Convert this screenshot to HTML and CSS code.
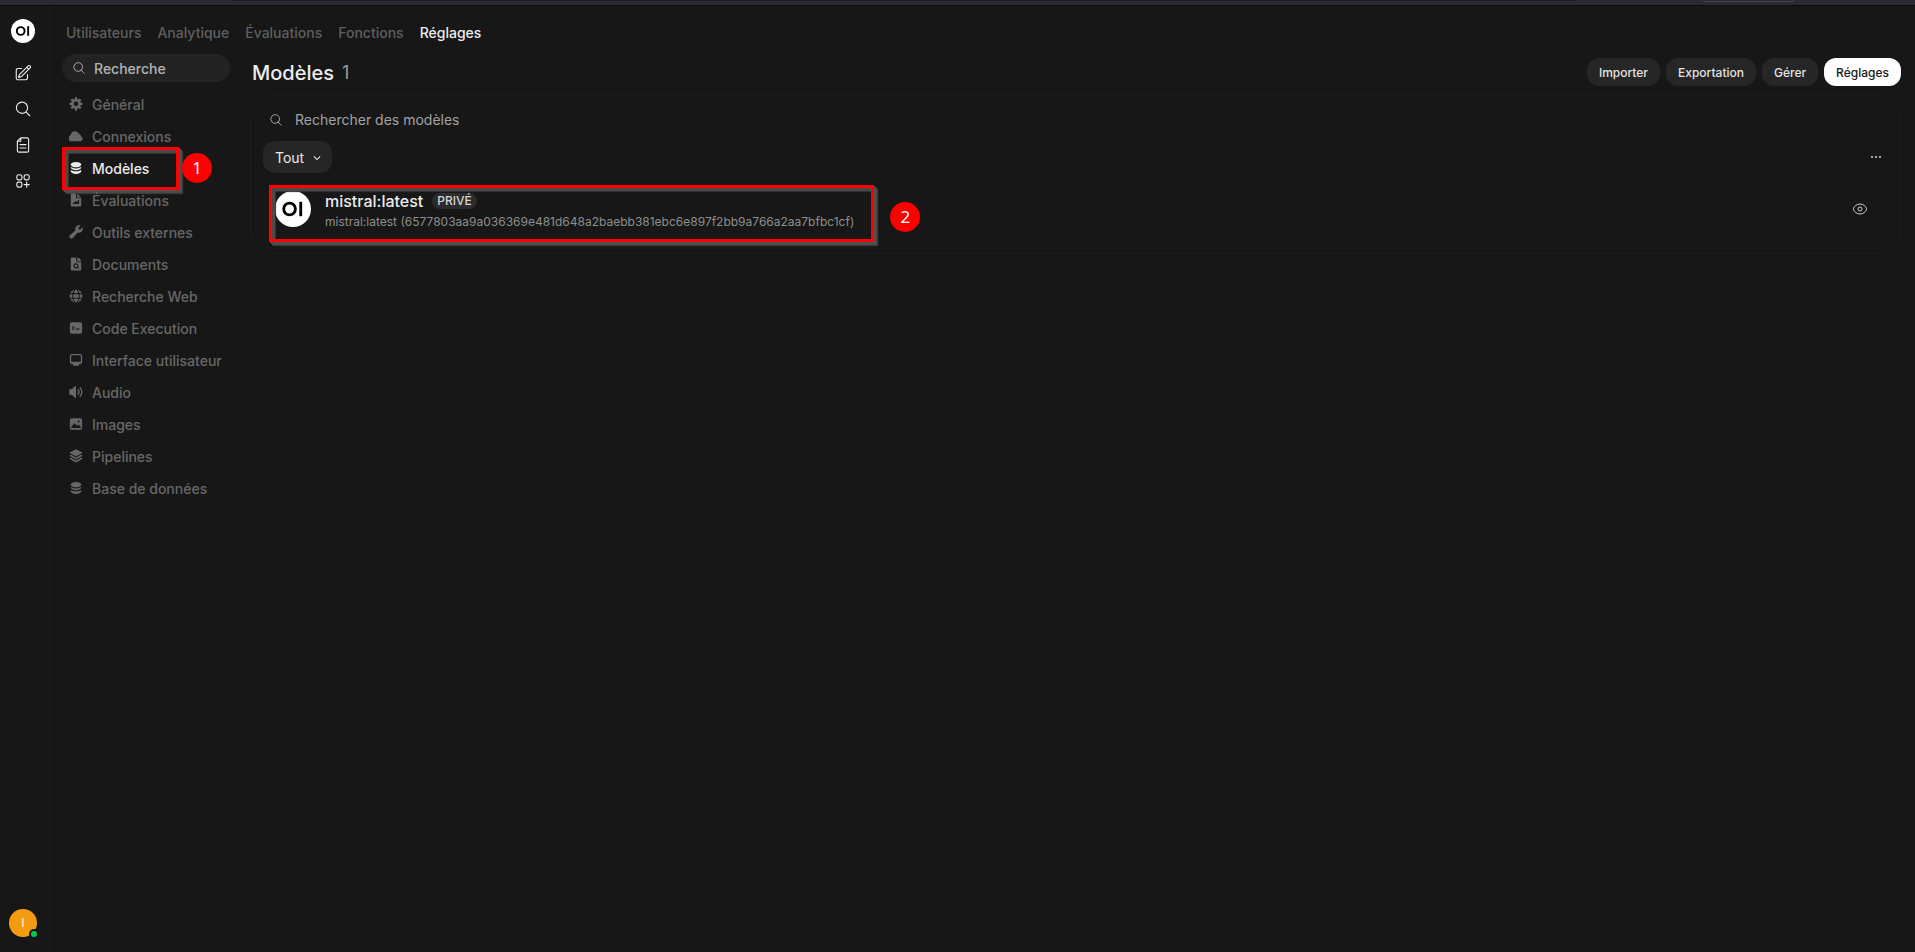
FILE: index.html
```html
<!DOCTYPE html>
<html lang="fr">
<head>
<meta charset="utf-8">
<title>Open WebUI – Réglages</title>
<link rel="stylesheet" href="styles.css">
</head>
<body>
<svg class="defs" aria-hidden="true">
  <symbol id="i-search" viewBox="0 0 24 24"><path d="m21 21-5.2-5.2m0 0A7.5 7.5 0 1 0 5.2 5.2a7.5 7.5 0 0 0 10.6 10.6Z"/></symbol>
  <symbol id="i-logo" viewBox="0 0 24 24"><circle cx="12" cy="12" r="12" fill="#fff"/><circle cx="9.700" cy="12" r="3.900" fill="none" stroke="#000" stroke-width="1.900"/><path d="M16.200 7.200h1.900v9.600h-1.900z" fill="#000"/></symbol>
  <symbol id="i-db" viewBox="0 0 24 24"><path d="M21 6.400c0 2.500-4 4.500-9 4.500s-9-2-9-4.500 4-4.500 9-4.500 9 2 9 4.500Z"/><path d="M12 12.800c2.700 0 5.200-.5 7.100-1.500.7-.3 1.400-.8 1.900-1.300v1.300c0 2.500-4 4.500-9 4.500s-9-2-9-4.500V10c.5.500 1.200 1 1.900 1.300 1.900 1 4.400 1.500 7.100 1.500Z"/><path d="M12 17.600c2.700 0 5.200-.5 7.100-1.500.7-.3 1.400-.8 1.900-1.300v2.800c0 2.500-4 4.500-9 4.500s-9-2-9-4.500v-2.800c.5.500 1.200 1 1.900 1.300 1.900 1 4.400 1.500 7.100 1.500Z"/></symbol>
</svg>
<div class="browser-edge"><div class="edge-tabs"></div><div class="edge-field"></div></div>
<div class="app">
  <aside class="rail">
    <a class="rail-logo" href="#" aria-label="Accueil"><svg viewBox="0 0 24 24"><use href="#i-logo"/></svg></a>
    <button class="rail-btn" aria-label="Nouvelle conversation"><svg class="line" viewBox="0 0 24 24"><path d="m16.900 4.500 1.700-1.700a1.900 1.900 0 1 1 2.600 2.700L10.600 16.100a4.500 4.500 0 0 1-1.900 1.100L6 18l.8-2.700a4.500 4.500 0 0 1 1.100-1.900l9-8.900Zm0 0 2.600 2.600M18 14v4.800A2.250 2.250 0 0 1 15.800 21H5.300A2.250 2.250 0 0 1 3 18.800V8.300A2.250 2.250 0 0 1 5.300 6H10"/></svg></button>
    <button class="rail-btn" aria-label="Recherche"><svg class="line" viewBox="0 0 24 24"><use href="#i-search"/></svg></button>
    <button class="rail-btn" aria-label="Notes"><svg class="line" viewBox="0 0 24 24"><path d="M9 2.500h8.500a2 2 0 0 1 2 2v15a2 2 0 0 1-2 2h-11a2 2 0 0 1-2-2V7L9 2.500ZM9 2.500V7H4.500M8 11.500h8M8 16h8"/></svg></button>
    <button class="rail-btn" aria-label="Espace de travail"><svg class="line" viewBox="0 0 24 24"><path d="M13.500 16.900h3.400m0 0h3.400m-3.400 0v-3.400m0 3.400v3.400M6 10.500h2.300a2.250 2.250 0 0 0 2.200-2.300V6a2.250 2.250 0 0 0-2.200-2.300H6A2.250 2.250 0 0 0 3.800 6v2.300A2.250 2.250 0 0 0 6 10.500Zm0 9.700h2.300a2.250 2.250 0 0 0 2.200-2.200v-2.300a2.250 2.250 0 0 0-2.200-2.200H6a2.250 2.250 0 0 0-2.200 2.200V18A2.250 2.250 0 0 0 6 20.200Zm9.800-9.700H18a2.250 2.250 0 0 0 2.200-2.300V6A2.250 2.250 0 0 0 18 3.700h-2.200A2.250 2.250 0 0 0 13.500 6v2.300a2.250 2.250 0 0 0 2.300 2.200Z"/></svg></button>
    <button class="avatar" aria-label="Profil">I<span class="status"></span></button>
  </aside>
  <div class="workspace">
    <nav class="tabs" aria-label="Administration">
      <a href="#">Utilisateurs</a>
      <a href="#">Analytique</a>
      <a href="#">Évaluations</a>
      <a href="#">Fonctions</a>
      <a href="#" class="active" aria-current="page">Réglages</a>
    </nav>
    <div class="body">
      <aside class="settings">
        <label class="side-search"><svg class="line" viewBox="0 0 24 24"><use href="#i-search"/></svg><input type="text" placeholder="Recherche" aria-label="Recherche"></label>
        <nav class="side-nav" aria-label="Réglages">
          <a href="#"><svg viewBox="0 0 16 16"><path fill-rule="evenodd" d="M6.800.300h2.400l.3 2.200 1.100.4 1.800-1.300 1.700 1.700-1.300 1.800.4 1.100 2.200.3v2.500l-2.200.3-.4 1.100 1.300 1.800-1.700 1.700-1.800-1.300-1.100.4-.3 2.700H6.800l-.3-2.700-1.100-.4-1.800 1.300-1.700-1.700 1.300-1.800-.4-1.100-2.300-.3V6.500l2.300-.3.4-1.100-1.300-1.800 1.700-1.700 1.800 1.300 1.100-.4ZM8 5.200a2.500 2.500 0 1 0 0 5 2.500 2.500 0 0 0 0-5Z"/></svg>Général</a>
          <a href="#"><svg viewBox="0 0 16 16"><path d="M3.500 14A3.500 3.500 0 0 1 2 7a4.900 4.900 0 0 1 9.400-1.500 3.400 3.400 0 0 1 2.500 3A2.900 2.900 0 0 1 13 14Z"/></svg>Connexions</a>
          <a href="#" class="active" aria-current="page"><svg viewBox="0 0 24 24"><use href="#i-db"/></svg>Modèles<span class="mark"></span><span class="badge">1</span></a>
          <a href="#"><svg viewBox="0 0 16 16"><path fill-rule="evenodd" d="M2 2A1.500 1.500 0 0 1 3.500.500H8v4A1.500 1.500 0 0 0 9.500 6H14v8a1.500 1.500 0 0 1-1.500 1.500h-9A1.500 1.500 0 0 1 2 14ZM9.300.700 13.800 5H9.300ZM4.500 11v1.500h7V8h-1.300v2H8.800v-.8H7.500v1H6V11Z"/></svg>Évaluations</a>
          <a href="#"><svg viewBox="0 0 16 16"><path d="M15.700 4.300A4.300 4.300 0 0 1 10 8.600L4.400 14.900a2.100 2.100 0 0 1-3.300-3.300l6.300-5.600A4.300 4.300 0 0 1 13.300.600l-2.700 2.800c.1 1 .9 1.700 1.900 1.900l2.800-2.700c.3.500.4 1.100.4 1.700Z"/></svg>Outils externes</a>
          <a href="#"><svg viewBox="0 0 16 16"><path fill-rule="evenodd" d="M2 2A1.500 1.500 0 0 1 3.500.500H8v3A2.500 2.500 0 0 0 10.500 6H14v8a1.500 1.500 0 0 1-1.500 1.500h-9A1.500 1.500 0 0 1 2 14ZM9.300.600c2.500.4 4.200 2 4.600 4.400h-3.100A1.500 1.500 0 0 1 9.300 3.500ZM8 7.200a2.900 2.900 0 1 0 1.500 5.300l1.200 1 .9-.9-1-1.100A2.900 2.900 0 0 0 8 7.200Zm0 1.300a1.600 1.600 0 1 1 0 3.200 1.600 1.600 0 0 1 0-3.200Z"/></svg>Documents</a>
          <a href="#"><svg viewBox="0 0 16 16"><circle cx="8" cy="8" r="7.400"/><path class="cut" d="M.5 5.300h15M.5 10.500h15M7 .5C3.300 4 3.300 12 7 15.500M9 .5c3.700 3.500 3.700 11.500 0 15"/></svg>Recherche Web</a>
          <a href="#"><svg viewBox="0 0 16 16"><path fill-rule="evenodd" d="M3 1.500h10a2 2 0 0 1 2 2v9a2 2 0 0 1-2 2H3a2 2 0 0 1-2-2v-9a2 2 0 0 1 2-2ZM4 5.300l-.9.900L5 8l-1.900 1.800.9.900L6.700 8ZM8 8.600v1.300h4V8.600Z"/></svg>Code Execution</a>
          <a href="#"><svg viewBox="0 0 16 16"><path fill-rule="evenodd" d="M3 1h10a2 2 0 0 1 2 2v7.500a2 2 0 0 1-2 2h-1.500v2h-7v-2H3a2 2 0 0 1-2-2V3a2 2 0 0 1 2-2Zm.5 1.500a1 1 0 0 0-1 1V9a1 1 0 0 0 1 1h9a1 1 0 0 0 1-1V3.500a1 1 0 0 0-1-1Z"/></svg>Interface utilisateur</a>
          <a href="#"><svg viewBox="0 0 16 16"><path d="M8 2v12c0 .8-.7 1-1.300.5L3.500 11.500H1.700C.8 11.500.3 10.800.3 10V6c0-.8.500-1.500 1.400-1.500h1.800l3.200-3C7.300 1 8 1.200 8 2Z"/><path class="wave" d="M10.300 5.500a3.600 3.600 0 0 1 0 5M12.700 3.200a6.800 6.800 0 0 1 0 9.600"/></svg>Audio</a>
          <a href="#"><svg viewBox="0 0 16 16"><path fill-rule="evenodd" d="M3 1.500h10a2 2 0 0 1 2 2v9a2 2 0 0 1-2 2H3a2 2 0 0 1-2-2v-9a2 2 0 0 1 2-2ZM2.500 11v1.500h11V11L11 8.500 9.500 10l-3-3Zm8.500-7a1.200 1.200 0 1 0 0 2.400A1.200 1.200 0 0 0 11 4Z"/></svg>Images</a>
          <a href="#"><svg viewBox="0 0 16 16"><path d="m8 .200 7.800 4L8 8.400.200 4.200ZM2.200 6.500 8 9.700l5.800-3.200 2 1.100L8 11.800.200 7.600ZM2.200 10 8 13.200l5.800-3.200 2 1.100L8 15.400.200 11.100Z"/></svg>Pipelines</a>
          <a href="#"><svg viewBox="0 0 24 24"><use href="#i-db"/></svg>Base de données</a>
        </nav>
      </aside>
      <main class="content">
        <header class="head">
          <h1>Modèles <span>1</span></h1>
          <div class="actions">
            <button>Importer</button>
            <button>Exportation</button>
            <button>Gérer</button>
            <button class="primary">Réglages</button>
          </div>
        </header>
        <section class="card">
          <label class="search"><svg class="line" viewBox="0 0 24 24"><use href="#i-search"/></svg><input type="text" placeholder="Rechercher des modèles" aria-label="Rechercher des modèles"></label>
          <div class="filters">
            <button class="filter">Tout<svg viewBox="0 0 24 24"><path d="m19.500 8.300-7.500 7.500-7.500-7.500"/></svg></button>
            <button class="icon-btn" aria-label="Plus d'options"><svg class="dots" viewBox="0 0 16 16"><circle cx="4" cy="8" r="1.100"/><circle cx="8" cy="8" r="1.100"/><circle cx="12" cy="8" r="1.100"/></svg></button>
          </div>
          <article class="model">
            <svg class="model-logo" viewBox="0 0 24 24"><use href="#i-logo"/></svg>
            <div class="model-text">
              <div class="model-name">mistral:latest <span class="tag">PRIVÉ</span></div>
              <div class="model-id">mistral:latest (6577803aa9a036369e481d648a2baebb381ebc6e897f2bb9a766a2aa7bfbc1cf)</div>
              <span class="mark"></span><span class="badge">2</span>
            </div>
            <button class="icon-btn" aria-label="Masquer le modèle"><svg class="eye" viewBox="0 0 24 24"><path d="M2 12.300a1 1 0 0 1 0-.6C3.400 7.500 7.400 4.500 12 4.500s8.600 3 10 7.200a1 1 0 0 1 0 .6c-1.400 4.200-5.400 7.200-10 7.200s-8.600-3-10-7.200Z"/><circle cx="12" cy="12" r="3"/></svg></button>
          </article>
        </section>
      </main>
    </div>
  </div>
</div>
</body>
</html>
```
FILE: styles.css
```css
* { box-sizing: border-box; }
body {
  margin: 0;
  min-height: 100vh;
  display: flex;
  flex-direction: column;
  background: #171717;
  color: #ececec;
  font: 500 14px/20px Inter, "Liberation Sans", sans-serif;
}
a { color: inherit; text-decoration: none; }
button { border: 0; padding: 0; background: none; color: inherit; font: inherit; cursor: pointer; }
input { border: 0; padding: 0; background: none; color: inherit; font: inherit; outline: 0; flex: 1; min-width: 0; }
svg { display: block; flex: none; }
.defs { position: absolute; width: 0; height: 0; }
.line { fill: none; stroke: currentColor; stroke-width: 1.5; stroke-linecap: round; stroke-linejoin: round; }

.browser-edge { height: 6px; padding-right: 121px; background: #2b2a33; border-bottom: 1px solid #0c0c0d; display: flex; justify-content: space-between; }
.edge-tabs { height: 1px; margin-left: 232px; background: #1f1e25; flex: 0 1 1345px; }
.edge-field { width: 91px; height: 2px; border: 1px solid #42414d; border-top: 0; border-radius: 0 0 4px 4px; }
.app { flex: 1; display: flex; }

.rail {
  width: 50px;
  padding: 13px 12px 15px 9px;
  border-right: 1px solid #1d1d1d;
  display: flex;
  flex-direction: column;
  align-items: center;
}
.rail-logo svg { width: 24px; height: 24px; }
.rail-logo { margin-bottom: 12px; }
.rail-btn { width: 28px; height: 36px; display: grid; place-items: center; }
.rail-btn svg { width: 18px; height: 18px; }
.avatar {
  position: relative;
  width: 28px;
  height: 28px;
  margin-top: auto;
  border-radius: 50%;
  background: #f39c12;
  color: #fdebd0;
  font-size: 12px;
  line-height: 28px;
}
.status {
  position: absolute;
  right: -2px;
  bottom: -2px;
  width: 10px;
  height: 10px;
  border: 2px solid #171717;
  border-radius: 50%;
  background: #00c950;
}

.workspace { flex: 1; min-width: 0; }
.tabs {
  height: 40px;
  padding: 17px 16px 0;
  display: flex;
  gap: 16px;
  color: #5f5f5f;
}
.tabs .active { color: #ececec; }

.body { display: flex; gap: 20px; padding: 0 14px 0 12px; }
.settings { width: 168px; padding-top: 8px; flex: none; }
.side-search {
  height: 28px;
  padding: 0 10px;
  border-radius: 14px;
  background: #232323;
  display: flex;
  align-items: center;
  gap: 8px;
  color: #b4b4b4;
}
.side-search svg { width: 14px; height: 14px; }
.side-search input { padding-top: 2px; }
.side-search input::placeholder { color: #b4b4b4; opacity: 1; }
.side-nav { margin-top: 7px; color: #676767; }
.side-nav a {
  position: relative;
  height: 32px;
  padding-left: 7px;
  display: flex;
  align-items: center;
  gap: 9px;
  white-space: nowrap;
}
.side-nav svg { width: 14px; height: 14px; margin-bottom: 2px; fill: currentColor; }
.side-nav .active { color: #ececec; }
.cut { fill: none; stroke: #171717; stroke-width: 1.2; }
.wave { fill: none; stroke: currentColor; stroke-width: 1.5; stroke-linecap: round; }

.content { flex: 1; min-width: 0; padding-top: 12px; }
.head { height: 28px; display: flex; justify-content: space-between; align-items: center; padding-left: 2px; }
h1 { margin: 0; padding-top: 1px; font-size: 20px; line-height: 28px; font-weight: 500; display: flex; gap: 8px; }
h1 span { font-size: 18px; color: #9b9b9b; font-weight: 400; }
.actions { display: flex; gap: 6px; font-size: 12px; }
.actions button { height: 28px; padding: 2px 12px 0; border-radius: 12px; background: #262626; color: #e4e4e4; font-weight: 500; }
.actions .primary { background: #fff; color: #171717; }

.card {
  margin-top: 8px;
  min-height: 160px;
  border: 1px solid #1d1d1d;
  border-radius: 24px;
  padding: 10px 12px;
}
.search { height: 30px; display: flex; align-items: center; gap: 12px; padding-left: 6px; color: #b4b4b4; font-weight: 400; }
.search svg { width: 14px; height: 14px; }
.search input::placeholder { color: #a3a3a3; opacity: 1; }
.filters { display: flex; justify-content: space-between; align-items: center; margin-top: 6px; padding-right: 4px; }
.filter { height: 32px; padding: 1px 10px 0 12px; border-radius: 12px; background: #262626; display: flex; align-items: center; gap: 8px; font-weight: 400; }
.filter svg { width: 10px; height: 10px; fill: none; stroke: currentColor; stroke-width: 2.5; }
.icon-btn { width: 16px; height: 16px; display: grid; place-items: center; color: #cdcdcd; }
.dots { width: 16px; height: 16px; fill: currentColor; }
.eye { width: 16px; height: 16px; fill: none; stroke: currentColor; stroke-width: 1.5; }

.model { display: flex; align-items: flex-start; gap: 14px; margin-top: 18px; padding: 0 20px 0 12px; }
.model-logo { width: 36px; height: 36px; }
.model-text { position: relative; flex: 0 1 auto; margin-right: auto; }
.model .icon-btn { margin-top: 10px; }
.model-name { display: flex; align-items: center; gap: 9px; font-size: 16px; line-height: 20px; }
.tag { padding: 0 5px; border-radius: 8px; background: #2c2c2c; font-size: 12px; line-height: 16px; color: #d4d4d4; }
.model-id { font-size: 12px; line-height: 22px; color: #8e8e8e; font-weight: 400; white-space: nowrap; }

.mark {
  position: absolute;
  border: 3px solid #f00;
  box-shadow:
    1px 1px #4f4f4f, 2px 2px #4f4f4f, 3px 3px #4a4a4a, 4px 4px 1px #3a3a3a,
    inset 3px 3px #4a4a4a, inset 4px 4px 1px #333;
  pointer-events: none;
}
.side-nav .mark { left: 0; top: -6px; width: 117px; height: 43px; }
.model .mark { left: -56px; right: -20px; top: -6px; height: 57px; }
.badge {
  position: absolute;
  width: 30px;
  height: 30px;
  border-radius: 50%;
  background: #f00;
  color: #fff;
  font: 17px/30px "Noto Sans", sans-serif;
  text-align: center;
}
.side-nav .badge { left: 120px; top: 0; }
.model .badge { right: -66px; top: 11px; }
```
